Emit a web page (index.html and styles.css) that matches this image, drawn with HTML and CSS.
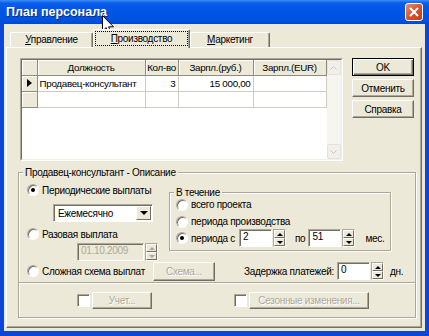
FILE: index.html
```html
<!DOCTYPE html>
<html lang="ru">
  <head>
    <meta charset="UTF-8" />
    <title>План персонала</title>
    <link rel="stylesheet" href="styles.css">
  </head>
  <body>
    <div class="window">
      <div class="titlebar">
        <span class="title">План персонала</span>
        <span class="close">
          <svg width="10" height="10" viewBox="0 0 10 10"><path d="M1 1L9 9M9 1L1 9" stroke="#fff" stroke-width="2"/></svg>
        </span>
      </div>

      <div class="client">
        <div class="tabs">
          <div class="tab t1"><u>У</u>правление</div>
          <div class="tab t2 active"><span class="focus"><u>П</u>роизводство</span></div>
          <div class="tab t3"><u>М</u>аркетинг</div>
        </div>

        <div class="panel">
          <div class="top-row">
            <div class="grid">
              <div class="grid-inner">
                <table>
                  <colgroup>
                    <col style="width:15px"><col style="width:108px"><col style="width:33px"><col style="width:75px"><col style="width:73px">
                  </colgroup>
                  <thead>
                    <tr>
                      <th></th>
                      <th>Должность</th>
                      <th>Кол-во</th>
                      <th>Зарпл.(руб.)</th>
                      <th>Зарпл.(EUR)</th>
                    </tr>
                  </thead>
                  <tbody>
                    <tr>
                      <td class="ind"><span class="arrow"></span></td>
                      <td>Продавец-консультант</td>
                      <td class="num">3</td>
                      <td class="num">15 000,00</td>
                      <td></td>
                    </tr>
                    <tr>
                      <td class="ind"></td>
                      <td></td>
                      <td></td>
                      <td></td>
                      <td></td>
                    </tr>
                  </tbody>
                </table>
                <div class="vscroll">
                  <span class="sb-btn"><svg width="7" height="4" viewBox="0 0 7 4"><path d="M0.5 3.5L3.5 0.5L6.5 3.5" fill="none" stroke="#c9c7ba"/></svg></span>
                  <span class="sb-btn"><svg width="7" height="4" viewBox="0 0 7 4"><path d="M0.5 0.5L3.5 3.5L6.5 0.5" fill="none" stroke="#c9c7ba"/></svg></span>
                </div>
              </div>
            </div>
            <div class="buttons">
              <button class="btn default">OK</button>
              <button class="btn">Отменить</button>
              <button class="btn">Справка</button>
            </div>
          </div>

          <fieldset class="group">
            <legend>Продавец-консультант - Описание</legend>
            <div class="group-top">
              <div class="pay-col">
                <div class="opt"><span class="radio checked"></span>Периодические выплаты</div>
                <div class="combo">
                  <span class="combo-text">Ежемесячно</span>
                  <span class="combo-btn"></span>
                </div>
                <div class="opt opt-once"><span class="radio"></span>Разовая выплата</div>
                <div class="spin-field date">
                  <span class="edit disabled">01.10.2009</span>
                  <span class="spin disabled"><i class="up"></i><i class="down"></i></span>
                </div>
              </div>

              <fieldset class="period">
                <legend>В течение</legend>
                <div class="opt"><span class="radio"></span>всего проекта</div>
                <div class="opt"><span class="radio"></span>периода производства</div>
                <div class="period-row">
                  <div class="opt opt-from"><span class="radio checked"></span>периода с</div>
                  <div class="spin-field">
                    <span class="edit">2</span>
                    <span class="spin"><i class="up"></i><i class="down"></i></span>
                  </div>
                  <span class="to">по</span>
                  <div class="spin-field">
                    <span class="edit">51</span>
                    <span class="spin"><i class="up"></i><i class="down"></i></span>
                  </div>
                  <span class="unit">мес.</span>
                </div>
              </fieldset>
            </div>

            <div class="group-bottom">
              <div class="opt opt-complex"><span class="radio"></span>Сложная схема выплат</div>
              <button class="btn disabled scheme">Схема...</button>
              <span class="delay">Задержка платежей:</span>
              <div class="spin-field">
                <span class="edit">0</span>
                <span class="spin"><i class="up"></i><i class="down"></i></span>
              </div>
              <span class="days">дн.</span>
            </div>
          </fieldset>

          <div class="extras">
            <span class="check"></span>
            <button class="btn disabled small account">Учет...</button>
            <span class="check check2"></span>
            <button class="btn disabled small season">Сезонные изменения...</button>
          </div>
        </div>
      </div>

      <svg class="cursor" width="13" height="20" viewBox="0 0 13 20">
        <path d="M0.5 0.5V16L4.2 12.6L6.7 18.5L9 17.5L6.6 11.8H11.5Z" fill="#fff" stroke="#000" stroke-linejoin="round"/>
      </svg>
    </div>
  </body>
</html>
```

FILE: styles.css
```css
* {
  box-sizing: border-box;
}
body {
  margin: 0;
  font-family: "Liberation Sans", Arial, sans-serif;
  font-size: 10px;
  letter-spacing: -0.3px;
  color: #000;
}
.window {
  position: relative;
  width: 429px;
  height: 336px;
  display: flex;
  flex-direction: column;
  background: #0a47d9;
}
.titlebar {
  height: 24px;
  display: flex;
  align-items: center;
  justify-content: space-between;
  padding: 0 6px 0 6px;
  color: #fff;
  background: linear-gradient(#3d8ef7 0, #0b5ee9 3px, #0258e7 8px, #0054e3 15px, #0051de 21px, #0046cb 24px);
}
.title {
  font-weight: bold;
  font-size: 12.5px;
  letter-spacing: 0;
  text-shadow: 1px 1px #0a2a8c;
}
.close {
  width: 18px;
  height: 18px;
  border: 1px solid #fff;
  border-radius: 3px;
  display: flex;
  align-items: center;
  justify-content: center;
  background: linear-gradient(135deg, #eb8f70, #d65430 50%, #c03e1a);
}
.cursor {
  position: absolute;
  left: 102px;
  top: 15px;
}

.client {
  flex: 1;
  display: flex;
  flex-direction: column;
  margin: 0 4px 5px 4px;
  padding: 5px 3px 3px 2px;
  background: #ece9d8;
}

/* tabs */
.tabs {
  display: flex;
  align-items: flex-end;
  height: 18px;
  padding-left: 4px;
}
.tab {
  height: 15px;
  line-height: 13px;
  text-align: center;
  background: #ece9d8;
  border: 1px solid;
  border-color: #fff #716f64 transparent #fff;
  border-bottom: 0;
  border-radius: 2px 2px 0 0;
  box-shadow: inset -1px 0 #aca899;
}
.t1 {
  width: 83px;
}
.t2 {
  width: 97px;
}
.t3 {
  width: 80px;
}
.tab.active {
  position: relative;
  z-index: 1;
  height: 19px;
  margin-bottom: -1px;
  padding: 1px 1px 2px 1px;
}
.focus {
  display: block;
  height: 100%;
  line-height: 13px;
  border: 1px dotted #000;
}

.panel {
  flex: 1;
  border: 1px solid;
  border-color: #fff #716f64 #716f64 #fff;
  box-shadow: inset -1px -1px #aca899;
  padding: 10px 5px 0 11px;
}

/* grid */
.top-row {
  display: flex;
}
.grid {
  width: 323px;
  height: 103px;
  margin-left: 2px;
  border: 1px solid;
  border-color: #aca899 #fff #fff #aca899;
}
.grid-inner {
  display: flex;
  height: 100%;
  background: #fff;
  border: 1px solid;
  border-color: #716f64 #f1efe2 #f1efe2 #716f64;
}
table {
  width: 304px;
  align-self: flex-start;
  table-layout: fixed;
  border-collapse: collapse;
  font-size: 9.8px;
}
th {
  height: 15px;
  padding: 0;
  font-weight: normal;
  text-align: center;
  white-space: nowrap;
  overflow: hidden;
  background: #ece9d8;
  border-right: 1px solid #8f8c7e;
  border-bottom: 1px solid #8f8c7e;
  box-shadow: inset 1px 1px #fff;
}
td {
  height: 16px;
  padding: 0 2px;
  white-space: nowrap;
  overflow: hidden;
  border-right: 1px solid #cfccc0;
  border-bottom: 1px solid #cfccc0;
}
td.ind {
  background: #ece9d8;
  border-color: #8f8c7e;
  box-shadow: inset 1px 1px #fff;
}
td.num {
  text-align: right;
}
.arrow {
  display: block;
  margin-left: 3px;
  width: 0;
  height: 0;
  border-top: 4px solid transparent;
  border-bottom: 4px solid transparent;
  border-left: 5px solid #000;
}
.vscroll {
  width: 15px;
  display: flex;
  flex-direction: column;
  justify-content: space-between;
  background: #f6f5f0;
}
.sb-btn {
  height: 15px;
  display: flex;
  align-items: center;
  justify-content: center;
  background: #f1f0ea;
  border: 1px solid #e4e2da;
  border-radius: 2px;
}

/* buttons */
.buttons {
  display: flex;
  flex-direction: column;
  gap: 3px;
  margin-left: 9px;
}
.btn {
  width: 62px;
  height: 18px;
  padding: 0;
  font: inherit;
  letter-spacing: inherit;
  white-space: nowrap;
  color: #000;
  background: #ece9d8;
  border: 1px solid;
  border-color: #fff #716f64 #716f64 #fff;
  box-shadow: inset -1px -1px #aca899;
}
.btn.default {
  border-color: #000;
  box-shadow: inset 1px 1px #fff, inset -1px -1px #716f64, inset -2px -2px #aca899;
}
.btn.disabled {
  color: #aca899;
  text-shadow: 1px 1px #fff;
}

/* group box */
.group {
  width: 398px;
  margin: 5px 0 0 0;
  padding: 0 8px 2px 8px;
  min-width: 0;
  border: 1px solid #aca899;
  box-shadow: inset 1px 1px #fff, 1px 1px #fff;
}
.group legend {
  margin-left: -4px;
  padding: 0 2px;
  line-height: 13px;
  background: #ece9d8;
}
.group-top {
  display: flex;
  height: 81px;
}
.pay-col {
  width: 142px;
  padding-top: 4px;
}
.opt {
  display: flex;
  align-items: center;
  height: 14px;
  white-space: nowrap;
}
.radio {
  width: 12px;
  height: 12px;
  margin-right: 3px;
  flex: none;
  border-radius: 50%;
  background: #fff;
  border: 1px solid;
  border-color: #aca899 #fff #fff #aca899;
  box-shadow: inset 1px 1px #716f64;
  position: relative;
}
.radio.checked::after {
  content: "";
  position: absolute;
  left: 3px;
  top: 3px;
  width: 4px;
  height: 4px;
  border-radius: 50%;
  background: #000;
}
.combo {
  display: flex;
  align-items: center;
  width: 100px;
  height: 18px;
  margin: 7px 0 0 26px;
  background: #fff;
  border: 1px solid;
  border-color: #aca899 #fff #fff #aca899;
  box-shadow: inset 1px 1px #716f64;
  padding: 1px 1px 1px 4px;
}
.combo-text {
  flex: 1;
}
.combo-btn {
  width: 15px;
  height: 14px;
  background: #ece9d8;
  border: 1px solid;
  border-color: #fff #716f64 #716f64 #fff;
  display: flex;
  align-items: center;
  justify-content: center;
}
.combo-btn::after {
  content: "";
  border-top: 4px solid #000;
  border-left: 4px solid transparent;
  border-right: 4px solid transparent;
}
.opt-once {
  margin-top: 5px;
}
.spin-field {
  display: flex;
  height: 18px;
}
.date {
  margin: 2px 0 0 50px;
}
.edit {
  width: 33px;
  height: 18px;
  line-height: 14px;
  padding-left: 3px;
  background: #fff;
  border: 1px solid;
  border-color: #aca899 #fff #fff #aca899;
  box-shadow: inset 1px 1px #716f64;
}
.date .edit {
  width: 67px;
}
.edit.disabled {
  color: #aca899;
  background: #ece9d8;
}
.spin {
  width: 13px;
  margin-left: 1px;
  display: flex;
  flex-direction: column;
  border: 1px solid;
  border-color: #aca899 #fff #fff #aca899;
}
.spin i {
  flex: 1;
  display: flex;
  align-items: center;
  justify-content: center;
  background: #ece9d8;
  border: 1px solid;
  border-color: #fff #716f64 #716f64 #fff;
}
.spin .up::after {
  content: "";
  border-bottom: 3px solid #000;
  border-left: 3px solid transparent;
  border-right: 3px solid transparent;
}
.spin .down::after {
  content: "";
  border-top: 3px solid #000;
  border-left: 3px solid transparent;
  border-right: 3px solid transparent;
}
.spin.disabled .up::after {
  border-bottom-color: #aca899;
}
.spin.disabled .down::after {
  border-top-color: #aca899;
}

/* period box */
.period {
  width: 222px;
  height: 64px;
  margin: 8px 0 0 0;
  padding: 0 4px 0 6px;
  min-width: 0;
  border: 1px solid #aca899;
  box-shadow: inset 1px 1px #fff, 1px 1px #fff;
}
.period legend {
  margin-left: -2px;
  padding: 0 2px;
  line-height: 11px;
  background: #ece9d8;
}
.period .opt {
  height: 13px;
}
.period .opt + .opt {
  margin-top: 4px;
}
.period-row {
  display: flex;
  align-items: center;
  margin-top: 1px;
}
.period .opt-from {
  width: 63px;
  margin-top: 0;
}
.to {
  margin: 0 3px 0 9px;
}
.unit {
  margin-left: 10px;
}

.group-bottom {
  display: flex;
  align-items: center;
  height: 18px;
  margin-top: 2px;
}
.opt-complex {
  width: 126px;
}
.scheme {
  height: 19px;
}
.delay {
  width: 93px;
  margin-left: 29px;
  white-space: nowrap;
}
.days {
  margin-left: 6px;
}

/* lower box */
.extras {
  display: flex;
  align-items: center;
  width: 398px;
  height: 35px;
  padding-left: 58px;
  border: 1px solid #aca899;
  border-top: 0;
  box-shadow: inset 1px 0 #fff, 1px 1px #fff;
}
.check {
  width: 13px;
  height: 13px;
  background: #fff;
  border: 1px solid;
  border-color: #aca899 #fff #fff #aca899;
  box-shadow: inset 1px 1px #716f64;
}
.btn.small {
  height: 17px;
  margin-left: 2px;
}
.account {
  width: 60px;
}
.check2 {
  margin-left: 82px;
}
.season {
  width: 120px;
  margin-left: 4px;
}
```
